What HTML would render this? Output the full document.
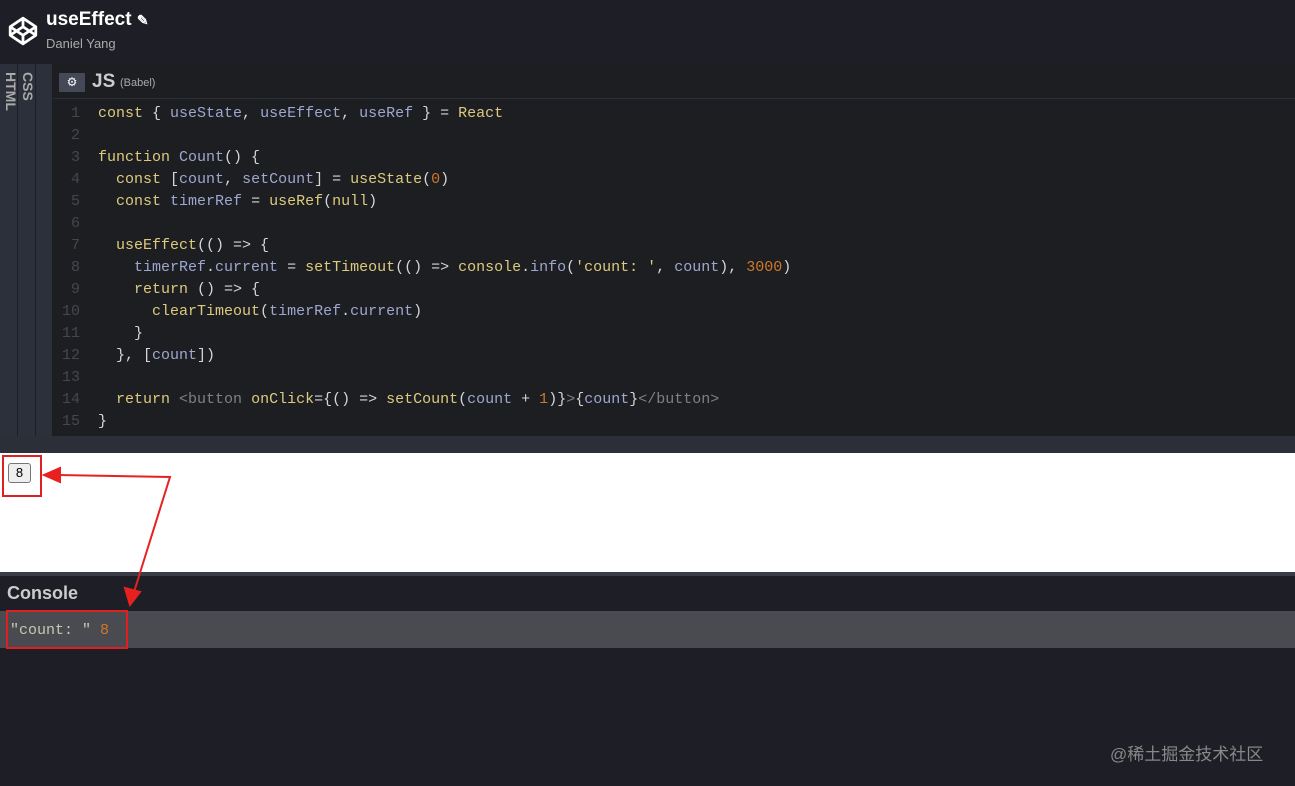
<!DOCTYPE html>
<html><head><meta charset="utf-8"><style>
*{margin:0;padding:0;box-sizing:border-box}
body{width:1295px;height:786px;background:#1d1e22;font-family:"Liberation Sans",sans-serif;position:relative;overflow:hidden}
.abs{position:absolute}
.code{font-family:"Liberation Mono",monospace;font-size:15px;line-height:22px;color:#d5d5d5;white-space:pre}
.k{color:#ddca7e}.v{color:#9ea7cf}.n{color:#d0782a}.t{color:#808080}
.ln{color:#45474f;text-align:right;width:20px}
</style></head><body>
<div class="abs" style="left:0;top:0;width:1295px;height:64px;background:#1e1f26"></div>
<svg class="abs" style="left:7px;top:15px" width="32" height="32" viewBox="0 0 30 30" fill="none" stroke="#fff" stroke-width="2.6" stroke-linejoin="round"><path d="M15 3 L27 11 L27 19 L15 27 L3 19 L3 11 Z M3 11 L15 19 L27 11 M3 19 L15 11 L27 19 M15 3 V11 M15 19 V27"/></svg>
<div class="abs" style="left:46px;top:9px;color:#fff;font-size:19px;font-weight:bold">useEffect <span style="font-size:14px">✎</span></div>
<div class="abs" style="left:46px;top:36px;color:#aaa;font-size:13px">Daniel Yang</div>
<div class="abs" style="left:0;top:64px;width:52px;height:372px;background:#2c303a"></div>
<div class="abs" style="left:17px;top:64px;width:1px;height:372px;background:#1e1f26"></div>
<div class="abs" style="left:35px;top:64px;width:1px;height:372px;background:#1e1f26"></div>
<div class="abs" style="left:3px;top:72px;color:#aaa;font-weight:bold;font-size:14px;writing-mode:vertical-rl">HTML</div>
<div class="abs" style="left:20px;top:72px;color:#aaa;font-weight:bold;font-size:14px;writing-mode:vertical-rl">CSS</div>
<div class="abs" style="left:53px;top:64px;width:1242px;height:35px;background:#1d1e22;border-bottom:1px solid #2c2f38"></div>
<div class="abs" style="left:59px;top:73px;width:26px;height:19px;background:#444857;color:#fff;font-size:12px;text-align:center;line-height:19px">⚙</div>
<div class="abs" style="left:92px;top:71px;color:#ccc;font-weight:bold;font-size:19px">JS</div>
<div class="abs" style="left:120px;top:77px;color:#aaa;font-size:11px">(Babel)</div>
<div class="abs code" style="left:60px;top:103px;line-height:22px"><div class="ln">1
2
3
4
5
6
7
8
9
10
11
12
13
14
15</div></div>
<div class="abs code" style="left:98px;top:103px"><span class="k">const</span> { <span class="v">useState</span>, <span class="v">useEffect</span>, <span class="v">useRef</span> } = <span class="k">React</span>

<span class="k">function</span> <span class="v">Count</span>() {
  <span class="k">const</span> [<span class="v">count</span>, <span class="v">setCount</span>] = <span class="k">useState</span>(<span class="n">0</span>)
  <span class="k">const</span> <span class="v">timerRef</span> = <span class="k">useRef</span>(<span class="k">null</span>)

  <span class="k">useEffect</span>(() => {
    <span class="v">timerRef</span>.<span class="v">current</span> = <span class="k">setTimeout</span>(() => <span class="k">console</span>.<span class="v">info</span>(<span class="k">'count: '</span>, <span class="v">count</span>), <span class="n">3000</span>)
    <span class="k">return</span> () => {
      <span class="k">clearTimeout</span>(<span class="v">timerRef</span>.<span class="v">current</span>)
    }
  }, [<span class="v">count</span>])

  <span class="k">return</span> <span class="t">&lt;button</span> <span class="k">onClick</span>={() => <span class="k">setCount</span>(<span class="v">count</span> + <span class="n">1</span>)}<span class="t">&gt;</span>{<span class="v">count</span>}<span class="t">&lt;/button&gt;</span>
}</div>
<div class="abs" style="left:0;top:436px;width:1295px;height:17px;background:#2c2f38"></div>
<div class="abs" style="left:0;top:453px;width:1295px;height:119px;background:#fff"></div>
<div class="abs" style="left:8px;top:463px;width:23px;height:20px;border:1px solid #777;border-radius:3px;background:#efefef;font-size:13px;text-align:center;line-height:18px">8</div>
<div class="abs" style="left:2px;top:455px;width:40px;height:42px;border:2px solid #e02020"></div>
<div class="abs" style="left:0;top:572px;width:1295px;height:4px;background:#3a3d47"></div>
<div class="abs" style="left:0;top:576px;width:1295px;height:35px;background:#1e1f26"></div>
<div class="abs" style="left:7px;top:583px;color:#ccc;font-weight:bold;font-size:18px">Console</div>
<div class="abs" style="left:0;top:611px;width:1295px;height:37px;background:#4a4b50"></div>
<div class="abs" style="left:0;top:648px;width:1295px;height:138px;background:#1e1f26"></div>
<div class="abs code" style="left:10px;top:620px;color:#c8c8b0">"count: " <span class="n">8</span></div>
<div class="abs" style="left:6px;top:610px;width:122px;height:39px;border:2px solid #e02020"></div>
<svg class="abs" style="left:0;top:0" width="1295" height="786"><g stroke="#e82020" stroke-width="2" fill="#e82020"><path d="M58 475 L170 477 L134 592" fill="none"/><path d="M44 475 L60 468 L60 482Z"/><path d="M130 605 L125 588 L140 592Z"/></g></svg>
<div class="abs" style="left:1110px;top:740px;color:#888;font-size:17px;font-family:'Liberation Sans','Noto Sans CJK SC',sans-serif">@稀土掘金技术社区</div>
</body></html>
